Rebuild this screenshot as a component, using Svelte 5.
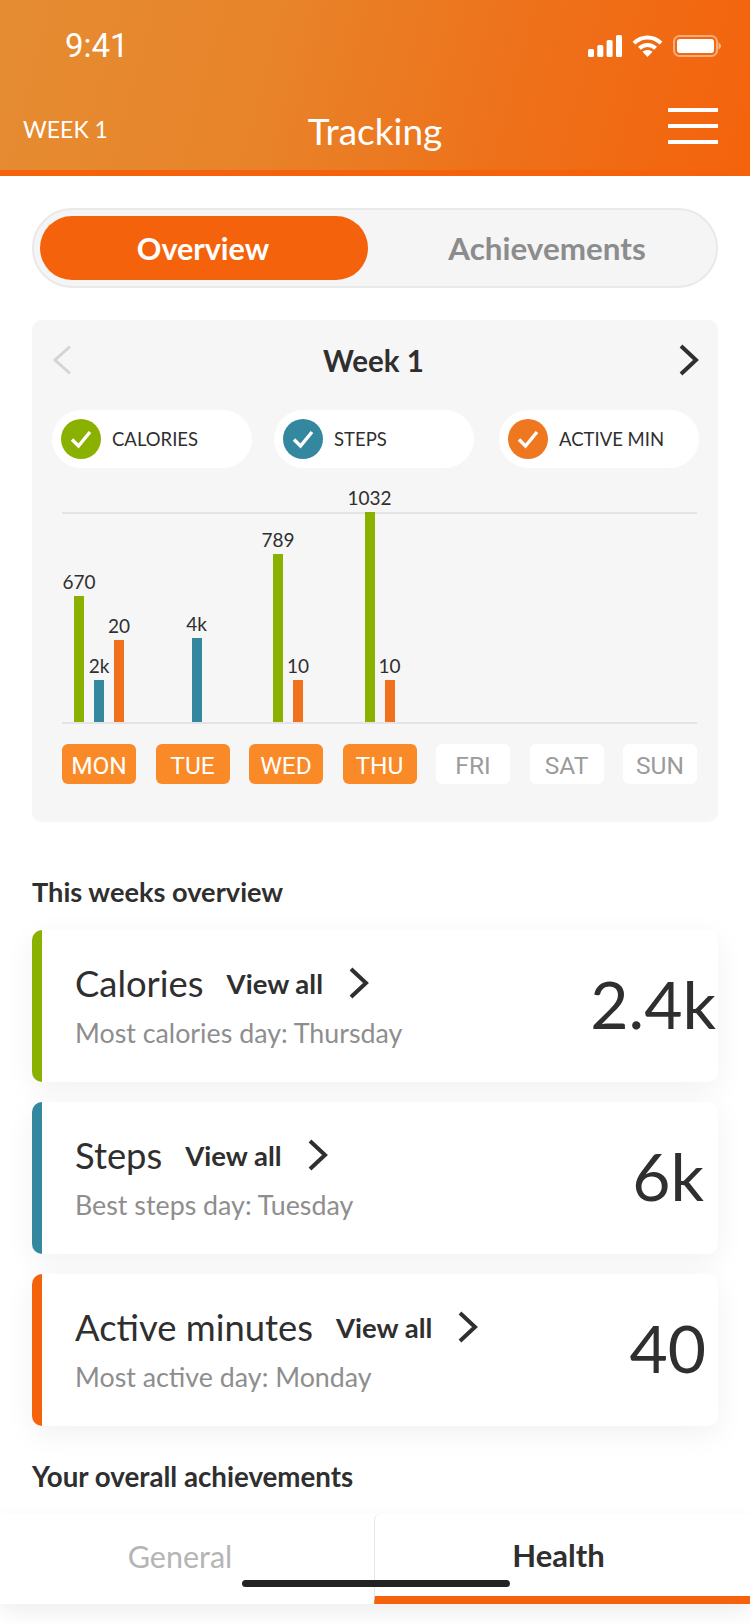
<script>
  const legend = [
    { label: "CALORIES", color: "#8bb100" },
    { label: "STEPS", color: "#33889f" },
    { label: "ACTIVE MIN", color: "#ee7720" }
  ];

  const green = "#8bb100";
  const blue = "#33889f";
  const orange = "#f0701c";

  const days = [
    { name: "MON", on: true, nudge: 0, bars: [{ h: 126, c: green, v: "670" }, { h: 42, c: blue, v: "2k" }, { h: 82, c: orange, v: "20" }] },
    { name: "TUE", on: true, nudge: 8, bars: [{ h: 84, c: blue, v: "4k" }] },
    { name: "WED", on: true, nudge: 4, bars: [{ h: 168, c: green, v: "789" }, { h: 42, c: orange, v: "10" }] },
    { name: "THU", on: true, nudge: 0, bars: [{ h: 210, c: green, v: "1032" }, { h: 42, c: orange, v: "10" }] },
    { name: "FRI", on: false, nudge: 0, bars: [] },
    { name: "SAT", on: false, nudge: 0, bars: [] },
    { name: "SUN", on: false, nudge: 0, bars: [] }
  ];

  const cards = [
    { title: "Calories", sub: "Most calories day: Thursday", value: "2.4k", color: "#8bb100", end: 2 },
    { title: "Steps", sub: "Best steps day: Tuesday", value: "6k", color: "#33889f", end: 14 },
    { title: "Active minutes", sub: "Most active day: Monday", value: "40", color: "#f4630c", end: 12 }
  ];
</script>

<div class="phone">
  <header>
    <div class="status">
      <span class="time">9:41</span>
      <div class="status-icons">
        <svg width="34" height="22" viewBox="0 0 34 22" fill="#fff">
          <rect x="0" y="14" width="6" height="8" rx="1.5" />
          <rect x="9.3" y="10" width="6" height="12" rx="1.5" />
          <rect x="18.6" y="5" width="6" height="17" rx="1.5" />
          <rect x="28" y="0" width="6" height="22" rx="1.5" />
        </svg>
        <svg width="31" height="22" viewBox="0 0 31 22" fill="none" stroke="#fff" stroke-width="4">
          <path d="M2 8.2C9.6 .6 21.4 .6 29 8.2" />
          <path d="M7.4 13.2c4.6-4.4 11.6-4.4 16.2 0" />
          <path d="M15.5 22l-5-5.2c2.9-2.3 7.1-2.3 10 0z" fill="#fff" stroke="none" />
        </svg>
        <svg width="48" height="22" viewBox="0 0 48 22">
          <rect x="1" y="1" width="43" height="20" rx="5.5" fill="none" stroke="#fff" stroke-opacity=".45" stroke-width="2" />
          <rect x="4" y="4" width="37" height="14" rx="3" fill="#fff" />
          <path d="M45.5 7.5c1.5.5 2.5 2 2.5 3.5s-1 3-2.5 3.5z" fill="#fff" fill-opacity=".5" />
        </svg>
      </div>
    </div>
    <div class="nav">
      <span class="week">WEEK 1</span>
      <span class="title">Tracking</span>
      <div class="burger"><i></i><i></i><i></i></div>
    </div>
  </header>

  <main>
    <div class="tabs">
      <div class="tab active">Overview</div>
      <div class="tab">Achievements</div>
    </div>

    <section class="chart-card">
      <div class="week-row">
        <svg width="20" height="30" viewBox="0 0 20 30" fill="none" stroke="#d4d4d4" stroke-width="3"><path d="M18 1.5L3 15l15 13.5" /></svg>
        <h2>Week 1</h2>
        <svg width="20" height="32" viewBox="0 0 20 32" fill="none" stroke="#2f2f2f" stroke-width="4"><path d="M2 2l15 14L2 30" /></svg>
      </div>

      <div class="legend">
        {#each legend as item}
          <div class="pill">
            <span class="tick" style="background:{item.color}">
              <svg width="24" height="20" viewBox="0 0 24 20" fill="none" stroke="#fff" stroke-width="3.4"><path d="M3 10.5l6.5 6.5L21 3" /></svg>
            </span>
            {item.label}
          </div>
        {/each}
      </div>

      <div class="plot">
        {#each days as day}
          <div class="col" style="padding-left:{day.nudge}px">
            {#each day.bars as bar}
              <div class="bar-wrap">
                <span class="bar-value">{bar.v}</span>
                <div class="bar" style="height:{bar.h}px;background:{bar.c}"></div>
              </div>
            {/each}
          </div>
        {/each}
      </div>

      <div class="days">
        {#each days as day}
          <div class="day" class:on={day.on}>{day.name}</div>
        {/each}
      </div>
    </section>

    <h3 class="first">This weeks overview</h3>

    <div class="cards">
      {#each cards as card}
        <article style="border-left-color:{card.color}">
          <div class="card-text">
            <div class="card-head">
              <span class="card-title">{card.title}</span>
              <span class="view">View all</span>
              <svg width="20" height="32" viewBox="0 0 20 32" fill="none" stroke="#2f2f2f" stroke-width="4"><path d="M2 2l15 14L2 30" /></svg>
            </div>
            <p>{card.sub}</p>
          </div>
          <span class="value" style="margin-right:{card.end}px">{card.value}</span>
        </article>
      {/each}
    </div>

    <h3 class="second">Your overall achievements</h3>
  </main>

  <div class="bottom-tabs">
    <div class="bottom-tab">General</div>
    <div class="bottom-tab current">Health</div>
  </div>

  <div class="home"></div>
</div>

<style>
  :global(body) {
    margin: 0;
    background: #fff;
  }

  .phone {
    position: relative;
    width: 750px;
    height: 1624px;
    overflow: hidden;
    background: #fff;
    font-family: "Lato", "Noto Sans", sans-serif;
    color: #2f2f2f;
  }

  header {
    height: 170px;
    border-bottom: 6px solid #f4630c;
    background: linear-gradient(105deg, #e58c32 0%, #e8842a 35%, #ee7019 70%, #f4630c 100%);
    color: #fff;
  }

  .status {
    height: 90px;
    padding: 0 29px 0 65px;
    display: flex;
    justify-content: space-between;
    align-items: center;
  }

  .time {
    font-family: "Roboto", sans-serif;
    font-size: 33px;
    font-weight: 400;
    margin-top: 1px;
  }

  .status-icons {
    display: flex;
    align-items: center;
    gap: 10px;
    margin-top: 1px;
  }

  .status-icons svg {
    display: block;
  }

  .nav {
    position: relative;
    height: 80px;
    padding: 0 32px 0 23px;
    display: flex;
    justify-content: space-between;
    align-items: center;
  }

  .week {
    font-size: 23px;
    margin-top: -2px;
  }

  .title {
    position: absolute;
    left: 0;
    right: 0;
    top: 19px;
    text-align: center;
    font-size: 37px;
    line-height: 44px;
  }

  .burger {
    display: flex;
    flex-direction: column;
    gap: 12px;
    margin-top: -8px;
  }

  .burger i {
    display: block;
    width: 50px;
    height: 4px;
    background: #fff;
  }

  main {
    padding: 32px 32px 0 32px;
  }

  .tabs {
    height: 80px;
    box-sizing: border-box;
    padding: 6px;
    display: flex;
    border: 2px solid #e9e9e9;
    border-radius: 40px;
    background: #f5f5f5;
  }

  .tab {
    flex: 1;
    display: flex;
    justify-content: center;
    align-items: center;
    padding-left: 16px;
    font-size: 31.4px;
    font-weight: 700;
    color: #8c8c8c;
  }

  .tab.active {
    flex: 0 0 328px;
    box-sizing: border-box;
    padding: 0 2px 0 0;
    border-radius: 32px;
    background: #f4630c;
    font-size: 30.5px;
    color: #fff;
  }

  .chart-card {
    margin-top: 32px;
    height: 502px;
    box-sizing: border-box;
    padding: 24px 19px 0 20px;
    border-radius: 10px;
    background: #f6f6f6;
  }

  .week-row {
    display: flex;
    justify-content: space-between;
    align-items: center;
    height: 32px;
  }

  .week-row svg {
    display: block;
  }

  h2 {
    margin: 0 4px 0 0;
    font-size: 29.5px;
    font-weight: 700;
  }

  .legend {
    margin-top: 34px;
    display: flex;
    gap: 22px;
  }

  .pill {
    width: 200px;
    height: 58px;
    box-sizing: border-box;
    padding-left: 9px;
    display: flex;
    align-items: center;
    gap: 11px;
    border-radius: 29px;
    background: #fff;
    font-size: 18.5px;
  }

  .pill:last-child {
    margin-left: auto;
  }

  .tick {
    width: 40px;
    height: 40px;
    display: flex;
    justify-content: center;
    align-items: center;
    border-radius: 50%;
  }

  .plot {
    margin: 44px 2px 0 10px;
    height: 212px;
    box-sizing: border-box;
    display: grid;
    grid-template-columns: repeat(7, 74px);
    justify-content: space-between;
    border-top: 2px solid #e4e4e4;
    border-bottom: 2px solid #e4e4e4;
  }

  .col {
    display: flex;
    justify-content: center;
    align-items: flex-end;
    gap: 10px;
    height: 208px;
  }

  .bar-wrap {
    width: 10px;
    display: flex;
    flex-direction: column;
    align-items: center;
    gap: 2px;
  }

  .bar-value {
    font-size: 19px;
    line-height: 24px;
    white-space: nowrap;
  }

  .bar {
    width: 10px;
  }

  .days {
    margin: 20px 2px 0 10px;
    display: grid;
    grid-template-columns: repeat(7, 74px);
    justify-content: space-between;
  }

  .day {
    height: 40px;
    box-sizing: border-box;
    padding-top: 3px;
    display: flex;
    justify-content: center;
    align-items: center;
    border-radius: 6px;
    background: #fff;
    font-family: "Roboto", sans-serif;
    font-size: 24.5px;
    color: #9b9b9b;
  }

  .day.on {
    background: #f98a27;
    color: #fff;
  }

  h3 {
    margin: 0;
    line-height: 32px;
    font-weight: 700;
  }

  h3.first {
    margin-top: 54px;
    font-size: 27.2px;
  }

  h3.second {
    margin-top: 35px;
    font-size: 27.7px;
  }

  .cards {
    margin-top: 22px;
    display: flex;
    flex-direction: column;
    gap: 20px;
  }

  article {
    height: 152px;
    box-sizing: border-box;
    padding-left: 33px;
    display: flex;
    justify-content: space-between;
    align-items: center;
    border-left: 10px solid;
    border-radius: 10px;
    background: #fff;
    box-shadow: 0 8px 30px rgba(0, 0, 0, 0.06);
  }

  .card-text {
    margin-top: -2px;
  }

  .card-head {
    display: flex;
    align-items: center;
  }

  .card-title {
    font-size: 36.4px;
    line-height: 44px;
  }

  .view {
    margin: 0 26px 0 23px;
    font-size: 27.5px;
    font-weight: 700;
  }

  .card-head svg {
    display: block;
  }

  p {
    margin: 12px 0 0;
    font-size: 26.8px;
    line-height: 32px;
    color: #8e8e8e;
  }

  .value {
    margin-top: -4px;
    font-size: 66px;
    line-height: 80px;
  }

  .bottom-tabs {
    position: absolute;
    left: 0;
    right: 0;
    top: 1514px;
    height: 90px;
    display: flex;
    box-shadow: 0 8px 20px rgba(0, 0, 0, 0.07);
  }

  .bottom-tab {
    flex: 1;
    display: flex;
    justify-content: center;
    align-items: center;
    box-sizing: border-box;
    padding: 0 14px 6px 0;
    background: #fff;
    font-size: 30.5px;
    color: #b5b5b5;
  }

  .bottom-tab.current {
    flex: 0 0 376px;
    padding: 0 8px 0 0;
    border-left: 1px solid #e4e4e4;
    border-bottom: 8px solid #f4630c;
    border-top-left-radius: 6px;
    font-size: 31px;
    font-weight: 700;
    color: #2f2f2f;
  }

  .home {
    position: absolute;
    left: 242px;
    top: 1580px;
    width: 268px;
    height: 7px;
    border-radius: 4px;
    background: #222;
  }
</style>
